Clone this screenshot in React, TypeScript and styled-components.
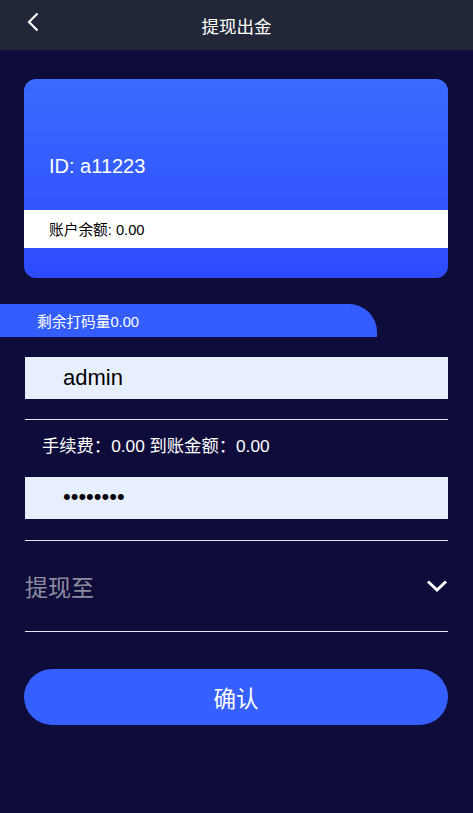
import React from "react";
import styled, { createGlobalStyle } from "styled-components";

const Global = createGlobalStyle`
  html, body { margin: 0; padding: 0; background: #0e0c3b; }
  body { font-family: "Liberation Sans", Arial, "Noto Sans CJK SC", sans-serif; }
  * { box-sizing: border-box; }
`;

const Page = styled.div`
  width: 473px;
  min-height: 813px;
  background: #0e0c3b;
  color: #fff;
`;

const Header = styled.header`
  height: 50px;
  background: #212639;
  display: flex;
  align-items: center;
  justify-content: center;
  position: relative;
`;

const Back = styled.button`
  position: absolute;
  left: 22px;
  top: 9px;
  width: 22px;
  height: 26px;
  padding: 0;
  border: 0;
  background: none;
  display: flex;
  align-items: center;
  justify-content: center;
`;

const Title = styled.h1`
  margin: 0;
  font-size: 17.5px;
  font-weight: normal;
  color: #fff;
  padding-top: 1px;
`;

const Body = styled.main`
  padding: 29px 0 0;
  display: flex;
  flex-direction: column;
`;

const Card = styled.section`
  margin: 0 25px 0 24px;
  height: 199px;
  border-radius: 12px;
  background: linear-gradient(180deg, #3b6aff 0%, #2d4bff 100%);
  display: flex;
  flex-direction: column;
  overflow: hidden;
`;

const CardId = styled.div`
  flex: 1;
  display: flex;
  align-items: flex-end;
  padding: 0 0 32px 25px;
  font-size: 20px;
`;

const BalanceStrip = styled.div`
  height: 38px;
  background: #fff;
  color: #000;
  font-size: 14.7px;
  display: flex;
  align-items: center;
  padding-left: 25px;
  padding-bottom: 1px;
  margin-bottom: 30px;
`;

const Tab = styled.div`
  margin-top: 26px;
  width: 377px;
  height: 33px;
  background: #335dff;
  border-radius: 0 28px 0 0;
  font-size: 14.7px;
  display: flex;
  align-items: center;
  padding-left: 37px;
`;

const Form = styled.div`
  margin: 20px 25px 0 25px;
  display: flex;
  flex-direction: column;
`;

const Field = styled.div`
  height: 42px;
  background: #e8effc;
  color: #000;
  display: flex;
  align-items: center;
  padding-left: 38px;
  font-size: 22px;
`;

const Dots = styled.span`
  font-size: 22px;
  letter-spacing: 0px;
  transform: translateY(-1px);
`;

const Divider = styled.hr<{ $gap: number }>`
  margin: ${(p) => p.$gap}px 0 0;
  border: 0;
  height: 1px;
  background: #e6e6f0;
`;

const Fee = styled.div`
  height: 57px;
  display: flex;
  align-items: center;
  padding-left: 17px;
  font-size: 17.3px;
  padding-bottom: 8px;
`;

const Select = styled.div`
  height: 90px;
  display: flex;
  align-items: center;
  justify-content: space-between;
  font-size: 23px;
  color: #8d8b9e;
`;

const Confirm = styled.button`
  margin: 37px 25px 0 24px;
  height: 56px;
  border: 0;
  border-radius: 28px;
  background: #3560ff;
  color: #fff;
  font-size: 22.5px;
  font-family: "Liberation Sans", Arial, "Noto Sans CJK SC", sans-serif;
`;

export default function App() {
  return (
    <Page>
      <Global />
      <Header>
        <Back aria-label="返回">
          <svg width="14" height="20" viewBox="0 0 14 20">
            <path d="M11.5 1.5 L3 10 L11.5 18.5" fill="none" stroke="#fff" strokeWidth="2.2" />
          </svg>
        </Back>
        <Title>提现出金</Title>
      </Header>
      <Body>
        <Card>
          <CardId>ID: a11223</CardId>
          <BalanceStrip>账户余额: 0.00</BalanceStrip>
        </Card>
        <Tab>剩余打码量0.00</Tab>
        <Form>
          <Field>admin</Field>
          <Divider $gap={20} />
          <Fee>手续费：0.00 到账金额：0.00</Fee>
          <Field>
            <Dots>••••••••</Dots>
          </Field>
          <Divider $gap={21} />
          <Select>
            <span>提现至</span>
            <svg width="22" height="14" viewBox="0 0 22 14">
              <path d="M2 2.5 L11 11 L20 2.5" fill="none" stroke="#fff" strokeWidth="3" />
            </svg>
          </Select>
          <Divider $gap={0} />
        </Form>
        <Confirm>确认</Confirm>
      </Body>
    </Page>
  );
}
